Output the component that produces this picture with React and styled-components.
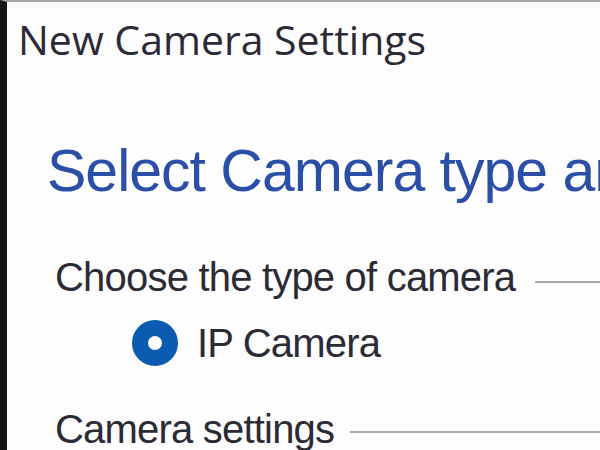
import React from 'react'
import styled, { createGlobalStyle } from 'styled-components'

const GlobalStyle = createGlobalStyle`
  html, body {
    margin: 0;
    padding: 0;
    background: #ffffff;
  }
`

const Window = styled.div`
  box-sizing: border-box;
  width: 600px;
  height: 450px;
  overflow: hidden;
  background: #fdfdfd;
  border-top: 2px solid #a4a4a4;
  border-left: 7px solid #151515;
  display: flex;
  flex-direction: column;
`

const TitleBar = styled.div`
  padding: 15px 0 0 11px;
  font-family: "Open Sans", "Noto Sans", sans-serif;
  font-size: 41px;
  line-height: 44px;
  color: #2c2a36;
  white-space: nowrap;
`

const Content = styled.div`
  display: flex;
  flex-direction: column;
  padding-left: 40px;
`

const Heading = styled.h1`
  margin: 80px 0 0 0;
  font-family: "Liberation Sans", Arial, sans-serif;
  font-weight: normal;
  font-size: 59px;
  line-height: 60px;
  letter-spacing: -1px;
  color: #2b4ea6;
  white-space: nowrap;
`

const Section = styled.div`
  display: flex;
  flex-direction: column;
  margin-top: ${p => p.$gap}px;
  padding-left: 8px;
`

const GroupHeader = styled.div`
  display: flex;
  align-items: center;
  gap: ${p => p.$gap}px;
  margin-right: -10px;
`

const Label = styled.span`
  font-family: "Liberation Sans", Arial, sans-serif;
  font-size: 40px;
  line-height: 42px;
  letter-spacing: -0.8px;
  color: #2b2b35;
  white-space: nowrap;
`

const Rule = styled.div`
  flex: 1;
  height: 2px;
  margin-top: ${p => p.$drop}px;
  background: #a8a8a8;
`

const RadioRow = styled.label`
  display: flex;
  align-items: center;
  gap: 19px;
  margin: 22px 0 0 85px;
`

const RadioDot = styled.span`
  box-sizing: border-box;
  width: 46px;
  height: 46px;
  border-radius: 50%;
  border: 16px solid #0b5bb0;
  background: #ffffff;
  flex-shrink: 0;
`

export default function App() {
  return (
    <>
      <GlobalStyle />
      <Window>
        <TitleBar>New Camera Settings</TitleBar>
        <Content>
          <Heading>Select Camera type and settings</Heading>
          <Section $gap={55}>
            <GroupHeader $gap={20}>
              <Label>Choose the type of camera</Label>
              <Rule $drop={10} />
            </GroupHeader>
          </Section>
          <RadioRow>
            <RadioDot />
            <Label>IP Camera</Label>
          </RadioRow>
          <Section $gap={42}>
            <GroupHeader $gap={16}>
              <Label>Camera settings</Label>
              <Rule $drop={6} />
            </GroupHeader>
          </Section>
        </Content>
      </Window>
    </>
  )
}
